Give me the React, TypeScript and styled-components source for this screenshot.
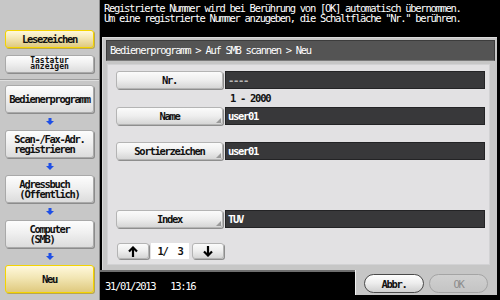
import React from "react";
import styled, { createGlobalStyle, css } from "styled-components";

const FONT = `"DejaVu Sans Mono", "Liberation Mono", monospace`;

const Global = createGlobalStyle`
  html, body { margin: 0; padding: 0; background: #000; }
  body { width: 500px; height: 300px; overflow: hidden; }
  * { box-sizing: border-box; }
`;

const Screen = styled.div`
  width: 500px;
  height: 300px;
  display: flex;
  background: #000;
  overflow: hidden;
  font-family: ${FONT};
  font-size: 10.5px;
  letter-spacing: -1.3px;
  color: #111;
`;

/* ---------- Sidebar ---------- */
const Sidebar = styled.div`
  width: 100px;
  flex: none;
  background: #c7c7c7;
  border-right: 1px solid #8a8a8a;
  display: flex;
  flex-direction: column;
`;

const SideGroup = styled.div<{ $top: number }>`
  display: flex;
  flex-direction: column;
  padding: ${(p) => p.$top}px 0 0 5px;
`;

const SideDivider = styled.div`
  height: 2px;
  margin-top: 6px;
  border-top: 1px solid #9c9c9c;
  border-bottom: 1px solid #dedede;
`;

const SideButton = styled.div<{ $h: number; $active?: boolean; $gap?: number }>`
  width: 89px;
  height: ${(p) => p.$h}px;
  margin-top: ${(p) => p.$gap ?? 0}px;
  border-radius: 3px;
  display: flex;
  align-items: center;
  justify-content: center;
  font-weight: bold;
  border: 1px solid #a9a9a9;
  background: linear-gradient(#fdfdfd, #f0f0f0 45%, #dcdcdc);
  box-shadow: 1px 1px 0 #8c8c8c;
  ${(p) =>
    p.$active &&
    css`
      border: 1.5px solid #f4d400;
      background: linear-gradient(#fff8dc, #f2e6b4 45%, #dfc97e);
      box-shadow: 1px 1px 0 #b9a650;
    `}
`;

const SideLabel = styled.span<{ $small?: boolean }>`
  display: inline-block;
  text-align: left;
  white-space: pre;
  line-height: 10.5px;
  ${(p) =>
    p.$small &&
    css`
      font-size: 8px;
      letter-spacing: 0px;
      line-height: 6.5px;
      text-align: center;
    `}
`;

const ArrowSlot = styled.div<{ $h: number }>`
  width: 89px;
  height: ${(p) => p.$h}px;
  display: flex;
  align-items: center;
  justify-content: center;
`;

const FlowArrow = ({ h }: { h: number }) => (
  <ArrowSlot $h={h}>
    <svg width="8" height="7" viewBox="0 0 8 7">
      <polygon points="2.5,0 5.5,0 5.5,3 8,3 4,7 0,3 2.5,3" fill="#1f4fe6" />
    </svg>
  </ArrowSlot>
);

/* ---------- Main ---------- */
const Main = styled.div`
  flex: 1;
  min-width: 0;
  display: flex;
  flex-direction: column;
  background: #000;
`;

const Message = styled.div`
  height: 37px;
  flex: none;
  padding: 3px 0 0 4px;
  color: #fff;
  line-height: 10px;
  white-space: pre;
`;

const Panel = styled.div`
  flex: 1;
  margin: 0 3px 0 2px;
  background: #c6c6c6;
  border-top: 1px solid #dadada;
  border-left: 1px solid #dadada;
  display: flex;
  flex-direction: column;
  padding: 2px 2px 5px 3px;
`;

const Header = styled.div`
  height: 21px;
  flex: none;
  background: #545454;
  border: 1px solid #3c3c3c;
  border-bottom-color: #7a7a7a;
  color: #fff;
  padding-left: 3px;
  line-height: 19px;
  white-space: pre;
`;

const Content = styled.div`
  flex: 1;
  margin: 3px 5px 0 1px;
  background: #e2e1e3;
  border: 1px solid #d2d2d4;
  padding: 6px 0 0 8px;
  display: flex;
  flex-direction: column;
`;

const Row = styled.div<{ $gap?: number }>`
  display: flex;
  align-items: stretch;
  height: 18px;
  margin-top: ${(p) => p.$gap ?? 0}px;
`;

const FormButton = styled.div<{ $corner?: boolean }>`
  position: relative;
  width: 107px;
  flex: none;
  border-radius: 3px;
  border: 1px solid #b4b4b4;
  background: linear-gradient(#fbfbfb, #eeeeee 50%, #d6d6d6);
  box-shadow: 1px 1px 0 #8e8e8e;
  display: flex;
  align-items: center;
  justify-content: center;
  font-weight: bold;
  ${(p) =>
    p.$corner &&
    css`
      &::after {
        content: "";
        position: absolute;
        right: 1px;
        bottom: 1px;
        border-style: solid;
        border-width: 0 0 5px 5px;
        border-color: transparent transparent #9a9a9a transparent;
      }
    `}
`;

const Field = styled.div<{ $muted?: boolean }>`
  width: 260px;
  margin-left: 2px;
  background: #38383a;
  border: 1px solid #232325;
  color: ${(p) => (p.$muted ? "#b8b8b8" : "#fff")};
  font-weight: bold;
  padding-left: 2px;
  line-height: 16px;
  white-space: pre;
`;

const RangeText = styled.div`
  height: 18px;
  line-height: 18px;
  padding-left: 114px;
  font-weight: bold;
  white-space: pre;
`;

const PagerRow = styled.div<{ $gap: number }>`
  display: flex;
  height: 16px;
  margin-top: ${(p) => p.$gap}px;
  padding-left: 1px;
`;

const PagerButton = styled.div<{ $gap?: number }>`
  width: 32px;
  margin-left: ${(p) => p.$gap ?? 0}px;
  border-radius: 3px;
  border: 1px solid #b4b4b4;
  background: linear-gradient(#fbfbfb, #eeeeee 50%, #d6d6d6);
  box-shadow: 1px 1px 0 #8e8e8e;
  display: flex;
  align-items: center;
  justify-content: center;
`;

const PageBox = styled.div`
  width: 38px;
  margin-left: 2px;
  background: #fff;
  display: flex;
  align-items: center;
  justify-content: center;
  font-weight: bold;
  white-space: pre;
`;

const Footer = styled.div`
  height: 30px;
  flex: none;
  display: flex;
`;

const DateBar = styled.div`
  width: 255px;
  flex: none;
  background: #000;
  border-top: 2px solid #6e6e6e;
  color: #fff;
  padding: 8px 0 0 5px;
  line-height: 12px;
  white-space: pre;
`;

const FooterPanel = styled.div`
  flex: none;
  width: 142px;
  height: 25px;
  background: #c6c6c6;
  border-left: 1px solid #f0f0f0;
  display: flex;
  align-items: flex-start;
  padding: 4px 0 0 8px;
  gap: 5px;
`;

const Pill = styled.div<{ $disabled?: boolean }>`
  width: 60px;
  height: 19px;
  border-radius: 10px;
  display: flex;
  align-items: center;
  justify-content: center;
  font-weight: bold;
  border: 1px solid #4a4a4a;
  background: linear-gradient(#ffffff, #ececec 50%, #cfcfcf);
  color: #111;
  ${(p) =>
    p.$disabled &&
    css`
      width: 59px;
      border-color: #a4a4a4;
      background: linear-gradient(#d0d0d0, #c4c4c4);
      color: #8c8c8c;
      font-weight: normal;
    `}
`;

const ArrowIcon = ({ up }: { up?: boolean }) => (
  <svg width="10" height="11" viewBox="0 0 10 11">
    <g
      transform={up ? undefined : "rotate(180 5 5.5)"}
      fill="none"
      stroke="#000"
      strokeWidth="2.2"
      strokeLinecap="butt"
      strokeLinejoin="miter"
    >
      <line x1="5" y1="2" x2="5" y2="11" />
      <polyline points="1,5.5 5,1.5 9,5.5" />
    </g>
  </svg>
);

export default function App() {
  return (
    <Screen>
      <Global />
      <Sidebar>
        <SideGroup $top={30}>
          <SideButton $h={18} $active>
            <SideLabel>Lesezeichen</SideLabel>
          </SideButton>
          <SideButton $h={18} $gap={7}>
            <SideLabel $small>{"Tastatur\nanzeigen"}</SideLabel>
          </SideButton>
        </SideGroup>
        <SideDivider />
        <SideGroup $top={4}>
          <SideButton $h={28}>
            <SideLabel>Bedienerprogramm</SideLabel>
          </SideButton>
          <FlowArrow h={17} />
          <SideButton $h={28}>
            <SideLabel>{"Scan-/Fax-Adr.\nregistrieren"}</SideLabel>
          </SideButton>
          <FlowArrow h={17} />
          <SideButton $h={28}>
            <SideLabel>{"Adressbuch\n(Öffentlich)"}</SideLabel>
          </SideButton>
          <FlowArrow h={17} />
          <SideButton $h={28}>
            <SideLabel>{"Computer\n(SMB)"}</SideLabel>
          </SideButton>
          <FlowArrow h={17} />
          <SideButton $h={28} $active>
            <SideLabel>Neu</SideLabel>
          </SideButton>
        </SideGroup>
      </Sidebar>
      <Main>
        <Message>
          {"Registrierte Nummer wird bei Berührung von [OK] automatisch übernommen.\nUm eine registrierte Nummer anzugeben, die Schaltfläche \"Nr.\" berühren."}
        </Message>
        <Panel>
          <Header>Bedienerprogramm &gt; Auf SMB scannen &gt; Neu</Header>
          <Content>
            <Row>
              <FormButton>Nr.</FormButton>
              <Field $muted>----</Field>
            </Row>
            <RangeText>1 - 2000</RangeText>
            <Row>
              <FormButton $corner>Name</FormButton>
              <Field>user01</Field>
            </Row>
            <Row $gap={17}>
              <FormButton $corner>Sortierzeichen</FormButton>
              <Field>user01</Field>
            </Row>
            <Row $gap={50}>
              <FormButton $corner>Index</FormButton>
              <Field>TUV</Field>
            </Row>
            <PagerRow $gap={15}>
              <PagerButton>
                <ArrowIcon up />
              </PagerButton>
              <PageBox>{"1/  3"}</PageBox>
              <PagerButton $gap={3}>
                <ArrowIcon />
              </PagerButton>
            </PagerRow>
          </Content>
        </Panel>
        <Footer>
          <DateBar>{"31/01/2013   13:16"}</DateBar>
          <FooterPanel>
            <Pill>Abbr.</Pill>
            <Pill $disabled>OK</Pill>
          </FooterPanel>
        </Footer>
      </Main>
    </Screen>
  );
}
